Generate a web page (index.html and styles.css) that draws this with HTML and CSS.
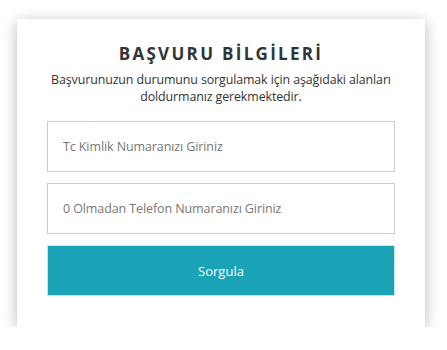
FILE: index.html
```html
<!DOCTYPE html>
<html lang="tr">
<head>
    <meta charset="UTF-8">
    <meta name="viewport" content="width=device-width, initial-scale=1.0">
    <title>Başvuru Bilgileri</title>
    <link rel="stylesheet" href="styles.css">
</head>
<body>

<div class="form-card">
    <h1 class="title">BAŞVURU BİLGİLERİ</h1>
    <p class="desc">Başvurunuzun durumunu sorgulamak için aşağıdaki alanları doldurmanız gerekmektedir.</p>

    <div class="form-fields">
        <input type="text" class="field" placeholder="Tc Kimlik Numaranızı Giriniz">
        <input type="text" class="field" placeholder="0 Olmadan Telefon Numaranızı Giriniz">
        <button class="submit-btn">Sorgula</button>
    </div>
</div>

</body>
</html>
```

FILE: styles.css
```css
body {
    font-family: 'Open Sans', 'Noto Sans', sans-serif;
    margin: 0;
    padding: 19px 0 0 17px;
    background-color: #fff;
    color: #333;
}
.form-card {
    width: 408px;
    box-sizing: border-box;
    padding: 24px 30px 31px;
    background-color: #fff;
    box-shadow: 0 3px 14px rgba(0, 0, 0, 0.28);
}
.title {
    margin: 0;
    text-align: center;
    font-size: 17px;
    font-weight: 700;
    letter-spacing: 2.3px;
    line-height: 22px;
    color: #2f3437;
}
.desc {
    margin: 6px -8px 0;
    text-align: center;
    font-size: 12.4px;
    letter-spacing: -0.1px;
    line-height: 17px;
    color: #333;
}
.form-fields {
    display: flex;
    flex-direction: column;
    gap: 11px;
    margin-top: 16px;
}
.field {
    height: 51px;
    box-sizing: border-box;
    padding: 0 15px;
    border: 1px solid #ccc;
    font-family: inherit;
    font-size: 12.5px;
    letter-spacing: -0.1px;
    outline: none;
}
.field::placeholder {
    color: #777;
}
.submit-btn {
    height: 51px;
    border: 1px solid #c9e6ea;
    background-color: #1aa3b6;
    color: #fff;
    font-family: inherit;
    font-size: 13px;
    cursor: pointer;
}
```
